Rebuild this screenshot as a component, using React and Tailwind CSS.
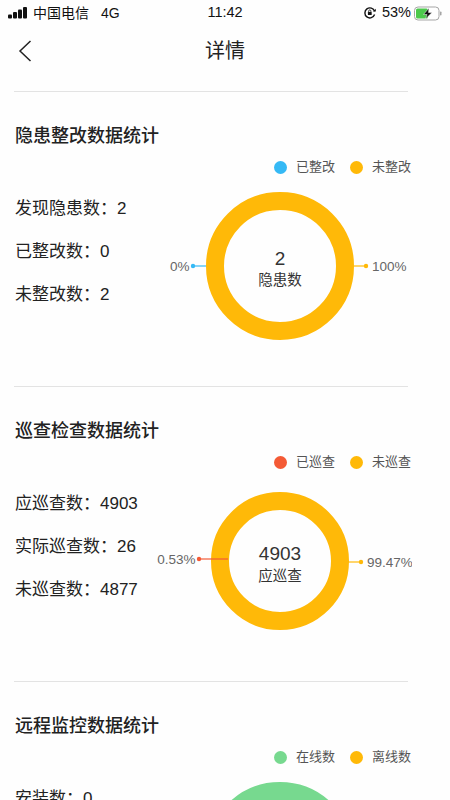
const cjk = "font-['Liberation_Sans','Noto_Sans_CJK_SC',sans-serif]";

function Signal() {
  return (
    <svg width="20" height="12" viewBox="0 0 20 12" className="ml-2">
      <rect x="0" y="7.5" width="4" height="4" rx="1" fill="#111" />
      <rect x="5" y="5" width="4" height="6.5" rx="1" fill="#111" />
      <rect x="10" y="2.5" width="4" height="9" rx="1" fill="#111" />
      <rect x="15" y="0" width="4" height="11.5" rx="1" fill="#111" />
    </svg>
  );
}

function Battery() {
  return (
    <svg width="28" height="15" viewBox="0 0 28 15">
      <rect x="0.5" y="1" width="24.5" height="13" rx="3.5" fill="#fff" stroke="#a5a5a5" />
      <rect x="2" y="2.5" width="12" height="10" rx="1.5" fill="#4cc94c" />
      <path d="M15 2 L9.5 8.5 H13 L11.5 13 L18 6.5 H14.5 Z" fill="#111" stroke="#fff" strokeWidth="0.5" />
      <rect x="26" y="5.5" width="1.5" height="4" rx="0.7" fill="#a5a5a5" />
    </svg>
  );
}

function RotationLock() {
  return (
    <svg width="12" height="12" viewBox="0 0 12 12" fill="none">
      <path d="M10.6 7.6 A5 5 0 1 1 10.6 4.2" stroke="#111" strokeWidth="1.4" />
      <path d="M9 4.4 H11.8 V1.8 Z" fill="#111" />
      <rect x="3.9" y="5" width="3.8" height="3" rx="0.5" fill="#111" />
      <path d="M4.7 5 V4 a1.1 1.1 0 0 1 2.2 0 V5" stroke="#111" strokeWidth="0.8" />
    </svg>
  );
}

function Legend({ items }) {
  return (
    <div className="flex items-center justify-end h-[22px] -mr-[3px] gap-[15px]">
      {items.map((item) => (
        <div key={item.label} className="flex items-center gap-[9px]">
          <span className={`w-[13px] h-[13px] rounded-full ${item.color}`} />
          <span className="text-[13px] text-[#555]">{item.label}</span>
        </div>
      ))}
    </div>
  );
}

function Donut({ r, ring, stroke = 18, value, name, left, right, valueY, nameY }) {
  const cx = 130;
  const cy = 88;
  return (
    <svg width="262" height="176" viewBox="0 0 262 176" className="shrink-0">
      <circle cx={cx} cy={cy} r={r - stroke / 2} fill="none" stroke={ring} strokeWidth={stroke} />
      {left && (
        <g>
          <line x1={left.from} y1={left.y} x2={left.to} y2={left.y} stroke={left.color} strokeWidth="1.2" />
          <circle cx={left.to} cy={left.y} r="2.2" fill={left.color} />
          <text x={left.to - 3.5} y={left.y + 4.5} textAnchor="end" fontSize="13.5" fill="#666">{left.text}</text>
        </g>
      )}
      {right && (
        <g>
          <line x1={right.from} y1={right.y} x2={right.to} y2={right.y} stroke={ring} strokeWidth="1.2" />
          <circle cx={right.to} cy={right.y} r="2.2" fill={ring} />
          <text x={right.to + 6} y={right.y + 4.5} fontSize="13.5" fill="#666">{right.text}</text>
        </g>
      )}
      {value && (
        <text x={cx} y={valueY} textAnchor="middle" fontSize="19" fill="#333">{value}</text>
      )}
      {name && (
        <text x={cx} y={nameY} textAnchor="middle" fontSize="14.5" fill="#333">{name}</text>
      )}
    </svg>
  );
}

function Section({ title, legend, stats, chart }) {
  return (
    <section className="h-[295px] border-b border-[#e3e3e3] pt-[32px]">
      <h2 className="text-[18px] leading-6 font-medium text-[#222] pl-px">{title}</h2>
      <div className="mt-[8px]">
        <Legend items={legend} />
      </div>
      <div className="flex -mr-[4px]">
        <div className="w-[136px] shrink-0 pt-[9px] pl-px">
          {stats.map((s) => (
            <div key={s} className="h-[43px] leading-[43px] text-[17px] text-[#222] whitespace-nowrap">{s}</div>
          ))}
        </div>
        {chart}
      </div>
    </section>
  );
}

export default function App() {
  return (
    <div className={`w-[450px] h-[800px] overflow-hidden bg-[#fefefe] ${cjk}`}>
      <div className="grid grid-cols-3 items-center h-[26px] text-[#111]">
        <div className="flex items-center text-[14px]">
          <Signal />
          <span className="ml-[5px]">中国电信</span>
          <span className="ml-3">4G</span>
        </div>
        <div className="text-center text-[14.5px] font-medium">11:42</div>
        <div className="flex items-center justify-end gap-[3px] pr-2 text-[14.5px]">
          <RotationLock />
          <span className="ml-[3px]">53%</span>
          <Battery />
        </div>
      </div>

      <div className="w-[450px] h-[66px] relative flex items-center justify-center pb-[17px]">
        <svg width="14" height="22" viewBox="0 0 14 22" fill="none" className="absolute left-[18px] top-[14px]">
          <path d="M12.5 1 L2 11 L12.5 21" stroke="#222" strokeWidth="1.5" />
        </svg>
        <span className="text-[20px] text-[#222]">详情</span>
        <div className="absolute left-[14px] bottom-0 w-[394px] border-b border-[#e3e3e3]" />
      </div>

      <div className="ml-[14px] w-[394px]">
        <Section
          title="隐患整改数据统计"
          legend={[
            { label: "已整改", color: "bg-[#35b9f5]" },
            { label: "未整改", color: "bg-[#ffb908]" },
          ]}
          stats={["发现隐患数：2", "已整改数：0", "未整改数：2"]}
          chart={
            <Donut
              r={74}
              ring="#ffb908"
              value="2"
              name="隐患数"
              valueY={87}
              nameY={107}
              left={{ from: 56, to: 43, y: 88, color: "#35b9f5", text: "0%" }}
              right={{ from: 204, to: 216, y: 88, text: "100%" }}
            />
          }
        />
        <Section
          title="巡查检查数据统计"
          legend={[
            { label: "已巡查", color: "bg-[#f45a35]" },
            { label: "未巡查", color: "bg-[#ffb908]" },
          ]}
          stats={["应巡查数：4903", "实际巡查数：26", "未巡查数：4877"]}
          chart={
            <Donut
              r={69}
              ring="#ffb908"
              value="4903"
              name="应巡查"
              valueY={87}
              nameY={108}
              left={{ from: 78, to: 49, y: 86, color: "#f45a35", text: "0.53%" }}
              right={{ from: 198, to: 211, y: 89, text: "99.47%" }}
            />
          }
        />
        <Section
          title="远程监控数据统计"
          legend={[
            { label: "在线数", color: "bg-[#77d98f]" },
            { label: "离线数", color: "bg-[#ffb908]" },
          ]}
          stats={["安装数：0"]}
          chart={<Donut r={74} ring="#77d98f" />}
        />
      </div>
    </div>
  );
}
